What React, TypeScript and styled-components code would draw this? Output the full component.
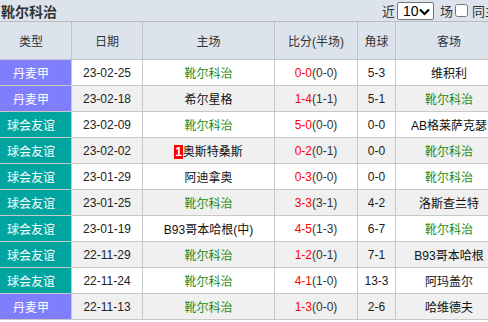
import React from "react";
import styled, { createGlobalStyle } from "styled-components";

const Global = createGlobalStyle`
  html, body { margin: 0; padding: 0; background: #fff; overflow: hidden; }
  body { font-family: "Liberation Sans", "Noto Sans CJK SC", sans-serif; font-size: 12px; color: #333; }
`;

const Wrap = styled.div`
  width: 506px;
  margin-left: -9px;
  background: #dde3ed;
`;

const TopBar = styled.div`
  height: 21px;
  display: flex;
  align-items: center;
  border-bottom: 1px solid #bcbcbc;
  white-space: nowrap;
`;

const Title = styled.div`
  flex: 1;
  font-weight: bold;
  font-size: 14px;
  color: #333;
  padding-left: 10px;
`;

const Controls = styled.div`
  display: flex;
  align-items: center;
  font-size: 13px;
  color: #333;
  width: 115px;
  flex: none;
  overflow: hidden;
  & > * { flex: none; }
`;

const SelectBox = styled.div`
  position: relative;
  width: 37px;
  height: 18px;
  margin: 0 6px 0 2px;
`;

const Select = styled.select`
  appearance: none;
  display: block;
  width: 37px;
  height: 18px;
  box-sizing: border-box;
  border: 1px solid #767676;
  border-radius: 2px;
  background: #fff;
  font-family: "Liberation Sans", sans-serif;
  font-size: 14px;
  padding: 0 0 0 5px;
  margin: 0;
  color: #000;
  line-height: 16px;
  outline: none;
`;

const Chevron = styled.svg`
  position: absolute;
  right: 4px;
  top: 6px;
  pointer-events: none;
`;

const Check = styled.input`
  margin: 0 4px 0 2px;
  width: 13px;
  height: 13px;
`;

const Table = styled.table`
  border-collapse: collapse;
  table-layout: fixed;
  width: 506px;
`;

const Th = styled.th<{ w: number }>`
  width: ${(p) => p.w}px;
  height: 37px;
  padding: 0;
  font-weight: normal;
  font-size: 12px;
  color: #333;
  background: #dde3ed;
  border-left: 1px solid #c2c2c2;
  border-bottom: 1px solid #c2c2c2;
  text-align: center;
  &:first-child { border-left: none; }
`;

const Tr = styled.tr<{ alt: boolean }>`
  background: ${(p) => (p.alt ? "#f0f0f0" : "#ffffff")};
`;

const Td = styled.td`
  height: 25px;
  padding: 0;
  text-align: center;
  white-space: nowrap;
  overflow: hidden;
  color: #222;
  border-left: 1px solid #c8c8c8;
  border-bottom: 1px solid #c8c8c8;
  &:first-child { border-left: none; }
`;

const TypeTd = styled(Td)<{ kind: "league" | "friendly" }>`
  background: ${(p) => (p.kind === "league" ? "#7f7ffe" : "#00a5a0")};
  color: #fff;
`;

const Team = styled.span<{ home?: boolean }>`
  color: ${(p) => (p.home ? "#1f8a12" : "#111")};
`;

const Red = styled.span`
  color: #f00;
`;

const Half = styled.span`
  color: #333;
`;

const Card = styled.span`
  display: inline-block;
  background: #f00;
  color: #fff;
  font-weight: bold;
  font-size: 12px;
  line-height: 14px;
  padding: 0 1px;
`;

type Row = {
  type: "丹麦甲" | "球会友谊";
  date: string;
  home: string;
  card?: string;
  score: string;
  half: string;
  corner: string;
  away: string;
};

const ME = "靴尔科治";

const rows: Row[] = [
  { type: "丹麦甲", date: "23-02-25", home: ME, score: "0-0", half: "(0-0)", corner: "5-3", away: "维积利" },
  { type: "丹麦甲", date: "23-02-18", home: "希尔星格", score: "1-4", half: "(1-1)", corner: "5-1", away: ME },
  { type: "球会友谊", date: "23-02-09", home: ME, score: "5-0", half: "(0-0)", corner: "0-0", away: "AB格莱萨克瑟" },
  { type: "球会友谊", date: "23-02-02", home: "奥斯特桑斯", card: "1", score: "0-2", half: "(0-1)", corner: "0-0", away: ME },
  { type: "球会友谊", date: "23-01-29", home: "阿迪拿奥", score: "0-3", half: "(0-0)", corner: "0-0", away: ME },
  { type: "球会友谊", date: "23-01-25", home: ME, score: "3-3", half: "(3-1)", corner: "4-2", away: "洛斯查兰特" },
  { type: "球会友谊", date: "23-01-19", home: "B93哥本哈根(中)", score: "4-5", half: "(1-3)", corner: "6-7", away: ME },
  { type: "球会友谊", date: "22-11-29", home: ME, score: "1-2", half: "(0-1)", corner: "7-1", away: "B93哥本哈根" },
  { type: "球会友谊", date: "22-11-24", home: ME, score: "4-1", half: "(1-0)", corner: "13-3", away: "阿玛盖尔" },
  { type: "丹麦甲", date: "22-11-13", home: ME, score: "1-3", half: "(0-0)", corner: "2-6", away: "哈维德夫" },
];

const cols = [
  { label: "类型", w: 80 },
  { label: "日期", w: 70 },
  { label: "主场", w: 131 },
  { label: "比分(半场)", w: 82 },
  { label: "角球", w: 37 },
  { label: "客场", w: 106 },
];

export default function App() {
  return (
    <Wrap>
      <Global />
      <TopBar>
        <Title>靴尔科治</Title>
        <Controls>
          <span>近</span>
          <SelectBox>
            <Select defaultValue="10">
              <option value="6">6</option>
              <option value="10">10</option>
              <option value="20">20</option>
            </Select>
            <Chevron width="11" height="8" viewBox="0 0 11 8">
              <path d="M1 1.5 L5.5 6 L10 1.5" stroke="#000" strokeWidth="2.2" fill="none" />
            </Chevron>
          </SelectBox>
          <span>场</span>
          <Check type="checkbox" />
          <span>同主客</span>
        </Controls>
      </TopBar>
      <Table>
        <thead>
          <tr>
            {cols.map((c) => (
              <Th key={c.label} w={c.w}>{c.label}</Th>
            ))}
          </tr>
        </thead>
        <tbody>
          {rows.map((r, i) => (
            <Tr key={r.date} alt={i % 2 === 1}>
              <TypeTd kind={r.type === "丹麦甲" ? "league" : "friendly"}>{r.type}</TypeTd>
              <Td>{r.date}</Td>
              <Td>
                {r.card && <Card>{r.card}</Card>}
                <Team home={r.home === ME}>{r.home}</Team>
              </Td>
              <Td>
                <Red>{r.score}</Red>
                <Half>{r.half}</Half>
              </Td>
              <Td>{r.corner}</Td>
              <Td>
                <Team home={r.away === ME}>{r.away}</Team>
              </Td>
            </Tr>
          ))}
        </tbody>
      </Table>
    </Wrap>
  );
}
